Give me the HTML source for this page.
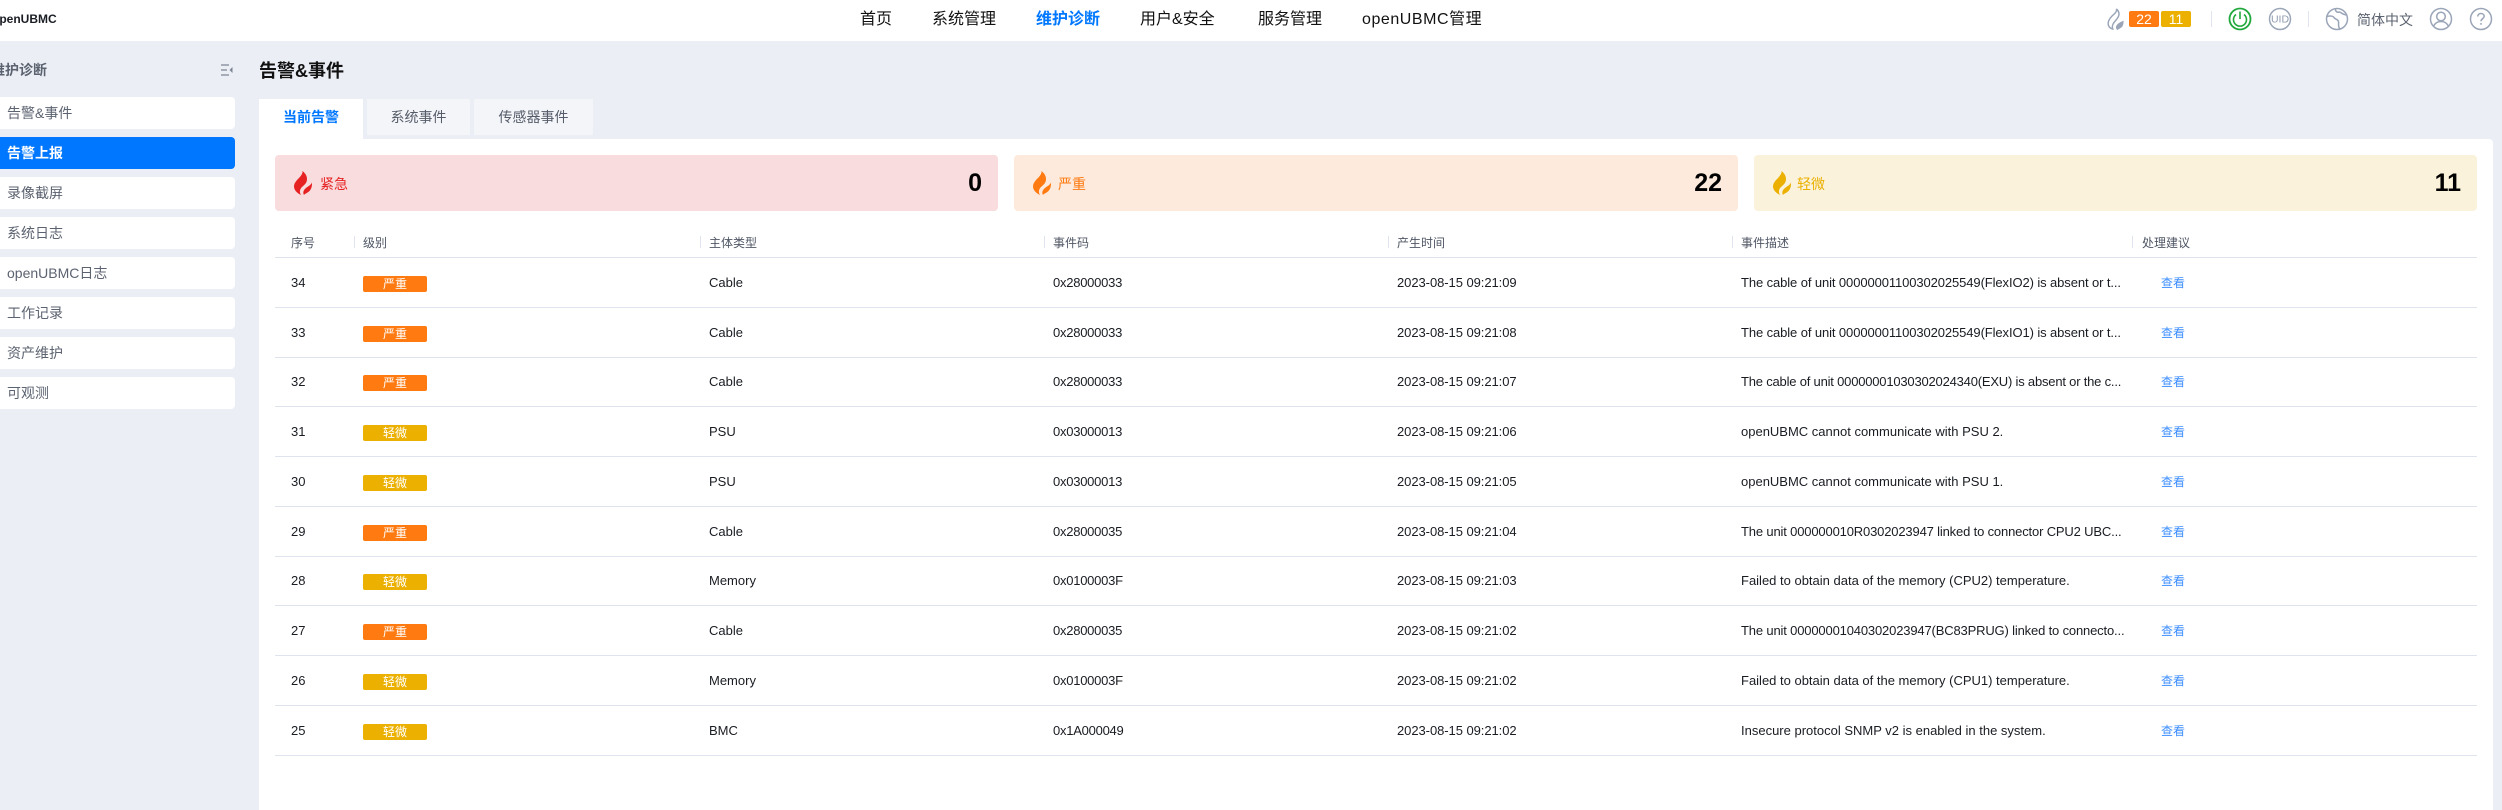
<!DOCTYPE html>
<html lang="zh"><head><meta charset="utf-8"><title>告警&amp;事件</title>
<style>
*{box-sizing:border-box}
html,body{margin:0;padding:0;width:2502px;height:810px;overflow:hidden;background:#ebeef5;font-family:"Liberation Sans","Noto Sans CJK SC",sans-serif;color:#000}
.a{position:absolute;white-space:nowrap}
#top{position:absolute;left:0;top:0;width:2502px;height:41px;background:#fff}
.nav{top:8px;font-size:16px;line-height:24px;color:#111}
.side{position:absolute;left:-10px;width:245px;height:32px;background:#fff;border-radius:4px;font-size:14px;line-height:32px;padding-left:17px;color:#5c6370}
.side.on{background:#0077ff;color:#fff;font-weight:700}
.tab{position:absolute;top:99px;height:36px;background:#f4f5f9;font-size:14px;line-height:36px;text-align:center;color:#555c69}
.card{position:absolute;top:155px;height:56px;border-radius:4px}
.card svg{position:absolute;top:16px}
.card span{position:absolute;top:18px;font-size:14px;line-height:22px}
.card b{position:absolute;right:16px;top:12px;font-size:25px;line-height:32px;color:#000}
.th{top:234px;font-size:12px;line-height:18px;color:#4f5664}
.sep{position:absolute;top:236px;width:1px;height:12px;background:#dfe4ee}
.line{position:absolute;left:275px;width:2202px;height:1px;background:#dfe3ee}
.td{font-size:13px;line-height:20px;color:#191c22}
.c{letter-spacing:-.25px}
.t{letter-spacing:-.06px}
.s1{letter-spacing:-.1px}
.s2{letter-spacing:-.16px}
.s3{letter-spacing:-.2px}
.bg{position:absolute;left:363px;width:64px;height:16px;border-radius:2px;color:#fff;font-size:12px;line-height:16px;text-align:center}
.o{background:#ff7a10}.y{background:#ebb000}
.lk{position:absolute;left:2161px;font-size:12px;line-height:20px;color:#3c8eff}
.ico{position:absolute;fill:none;stroke:#9aa5b8;stroke-width:1.5}
</style></head><body>
<svg width="0" height="0" style="position:absolute"><defs>
<symbol id="fl" viewBox="0 0 18 24"><path d="M8.500 0C9 3 6 6 3 9C1 11.500 0 13 0 15.500C0 19 3 22 7 24C5.500 21.500 5.500 19 7.500 16.500C10 14 13 12.500 13 8C13 4.500 11 2 8.500 0Z"/><path d="M18 11.500C17 14 14.500 15 12 17C9.500 19 8.500 21.500 10 24C11 22.500 13.500 22 15.500 20C17.500 18 18.200 14.500 18 11.500Z"/></symbol>
</defs></svg>

<div id="top"></div>
<div class="a" style="left:-8px;top:10px;font-size:12px;line-height:18px;font-weight:700;color:#1a1d24">openUBMC</div>
<div class="a nav" style="left:860px">首页</div>
<div class="a nav" style="left:932px">系统管理</div>
<div class="a nav" style="left:1036px;color:#0077ff;font-weight:700">维护诊断</div>
<div class="a nav" style="left:1140px">用户&amp;安全</div>
<div class="a nav" style="left:1258px">服务管理</div>
<div class="a nav" style="left:1362px;letter-spacing:.55px">openUBMC管理</div>

<svg style="position:absolute;left:2107px;top:8px;fill:none;stroke:#9aa5b8;stroke-width:1.600" width="17" height="22" viewBox="0 0 18 24"><path d="M10 1C11 4 8 6 5 9C2 12 1 14 1 17C1 20 3 22 6 23C5 20 5.500 18 8 15C10 12.500 12.500 10.500 12.800 7C13 4 11.500 2.500 10 1Z"/><path d="M17 15C14.500 16 11.500 17.500 10.500 20C10 21 10.300 22 11 23C12.500 22 14.500 21.500 16 19.500C16.800 18 17 16.500 17 15Z" fill="#9aa5b8"/></svg>
<div class="a" style="left:2129px;top:11px;width:30px;height:16px;border-radius:2px;background:#ff7a10;color:#fff;font-size:14px;line-height:16px;text-align:center">22</div>
<div class="a" style="left:2161px;top:11px;width:30px;height:16px;border-radius:2px;background:#ebb000;color:#fff;font-size:14px;line-height:16px;text-align:center">11</div>
<div class="a" style="left:2211px;top:11px;width:1px;height:16px;background:#dfe4ee"></div>
<svg style="position:absolute;left:2228px;top:7px" width="24" height="24" viewBox="0 0 24 24" fill="none" stroke="#20a83c"><circle cx="12" cy="12" r="10.500" stroke-width="1.800"/><path d="M8 7.500A6.500 6.500 0 1 0 16 7.500M12 4.500V12" stroke-width="1.600"/></svg>
<svg class="ico" style="left:2268px;top:7px" width="24" height="24" viewBox="0 0 24 24"><circle cx="12" cy="12" r="10.500"/><text x="12" y="15.700" text-anchor="middle" font-size="10.500" fill="#8f9aae" stroke="none" font-family="Liberation Sans">UID</text></svg>
<div class="a" style="left:2308px;top:11px;width:1px;height:16px;background:#dfe4ee"></div>
<svg class="ico" style="left:2325px;top:7px" width="24" height="24" viewBox="0 0 24 24"><circle cx="12" cy="12" r="10.500"/><path d="M2 9.500C5 8.500 8 9 9 10.500C10 12.500 13 12 13.500 14.500C14 17 12.500 19.500 15 22M10.500 1.500C10 4 12 6 14.500 5C16 5 16.500 7.500 22 8"/></svg>
<div class="a" style="left:2357px;top:9px;font-size:14px;line-height:22px;color:#5c6370">简体中文</div>
<svg class="ico" style="left:2429px;top:7px" width="24" height="24" viewBox="0 0 24 24"><circle cx="12" cy="12" r="10.500"/><circle cx="12" cy="9.500" r="4.300"/><path d="M4.500 19.500C6 15.800 9 14.500 12 14.500C15 14.500 18 15.800 19.500 19.500"/></svg>
<svg class="ico" style="left:2469px;top:7px" width="24" height="24" viewBox="0 0 24 24"><circle cx="12" cy="12" r="10.500"/><path d="M8.800 9.500C8.800 7.500 10.300 6.500 12 6.500C13.800 6.500 15.200 7.600 15.200 9.300C15.200 11.500 12 11.800 12 14.300M12 16V17.800"/></svg>

<div class="a" style="left:-9px;top:59px;font-size:14px;line-height:22px;font-weight:700;color:#5c6370">维护诊断</div>
<svg style="position:absolute;left:221px;top:64px" width="12" height="12" viewBox="0 0 12 12" fill="none" stroke="#7d8593" stroke-width="1.300"><path d="M0 1H8M0 6H6M0 11H8"/><path d="M11.500 3L8.500 6L11.500 9Z" fill="#7d8593" stroke="none"/></svg>
<div class="side" style="top:97px">告警&amp;事件</div>
<div class="side on" style="top:137px">告警上报</div>
<div class="side" style="top:177px">录像截屏</div>
<div class="side" style="top:217px">系统日志</div>
<div class="side" style="top:257px">openUBMC日志</div>
<div class="side" style="top:297px">工作记录</div>
<div class="side" style="top:337px">资产维护</div>
<div class="side" style="top:377px">可观测</div>

<div class="a" style="left:259px;top:58px;font-size:18px;line-height:26px;font-weight:700;color:#111">告警&amp;事件</div>
<div class="a" style="left:259px;top:139px;width:2234px;height:671px;background:#fff;border-radius:0 4px 0 0"></div>
<div class="tab" style="left:259px;width:104px;height:40px;background:#fff;color:#0077ff;font-weight:700">当前告警</div>
<div class="tab" style="left:367px;width:103px">系统事件</div>
<div class="tab" style="left:474px;width:119px">传感器事件</div>

<div class="card" style="left:275px;width:723px;background:#f9dcdd"><svg style="left:19px" width="18" height="24" fill="#e62222"><use href="#fl"/></svg><span style="left:45px;color:#e62222">紧急</span><b>0</b></div>
<div class="card" style="left:1014px;width:724px;background:#fdeadc"><svg style="left:19px" width="18" height="24" fill="#ff7a10"><use href="#fl"/></svg><span style="left:44px;color:#ff7a10">严重</span><b>22</b></div>
<div class="card" style="left:1754px;width:723px;background:#fbf2db"><svg style="left:19px" width="18" height="24" fill="#ebb000"><use href="#fl"/></svg><span style="left:43px;color:#ebb000">轻微</span><b>11</b></div>

<div class="a th" style="left:291px">序号</div><div class="sep" style="left:354px"></div>
<div class="a th" style="left:363px">级别</div><div class="sep" style="left:700px"></div>
<div class="a th" style="left:709px">主体类型</div><div class="sep" style="left:1044px"></div>
<div class="a th" style="left:1053px">事件码</div><div class="sep" style="left:1388px"></div>
<div class="a th" style="left:1397px">产生时间</div><div class="sep" style="left:1732px"></div>
<div class="a th" style="left:1741px">事件描述</div><div class="sep" style="left:2132px"></div>
<div class="a th" style="left:2142px">处理建议</div>
<div class="line" style="top:257px"></div>

<div class="a td" style="left:291px;top:273px">34</div><div class="bg o" style="top:276px">严重</div><div class="a td" style="left:709px;top:273px">Cable</div><div class="a td c" style="left:1053px;top:273px">0x28000033</div><div class="a td t" style="left:1397px;top:273px">2023-08-15 09:21:09</div><div class="a td s1" style="left:1741px;top:273px">The cable of unit 00000001100302025549(FlexIO2) is absent or t...</div><div class="lk" style="top:273px">查看</div><div class="line" style="top:307px"></div>
<div class="a td" style="left:291px;top:323px">33</div><div class="bg o" style="top:326px">严重</div><div class="a td" style="left:709px;top:323px">Cable</div><div class="a td c" style="left:1053px;top:323px">0x28000033</div><div class="a td t" style="left:1397px;top:323px">2023-08-15 09:21:08</div><div class="a td s1" style="left:1741px;top:323px">The cable of unit 00000001100302025549(FlexIO1) is absent or t...</div><div class="lk" style="top:323px">查看</div><div class="line" style="top:357px"></div>
<div class="a td" style="left:291px;top:372px">32</div><div class="bg o" style="top:375px">严重</div><div class="a td" style="left:709px;top:372px">Cable</div><div class="a td c" style="left:1053px;top:372px">0x28000033</div><div class="a td t" style="left:1397px;top:372px">2023-08-15 09:21:07</div><div class="a td s3" style="left:1741px;top:372px">The cable of unit 00000001030302024340(EXU) is absent or the c...</div><div class="lk" style="top:372px">查看</div><div class="line" style="top:406px"></div>
<div class="a td" style="left:291px;top:422px">31</div><div class="bg y" style="top:425px">轻微</div><div class="a td" style="left:709px;top:422px">PSU</div><div class="a td c" style="left:1053px;top:422px">0x03000013</div><div class="a td t" style="left:1397px;top:422px">2023-08-15 09:21:06</div><div class="a td" style="left:1741px;top:422px">openUBMC cannot communicate with PSU 2.</div><div class="lk" style="top:422px">查看</div><div class="line" style="top:456px"></div>
<div class="a td" style="left:291px;top:472px">30</div><div class="bg y" style="top:475px">轻微</div><div class="a td" style="left:709px;top:472px">PSU</div><div class="a td c" style="left:1053px;top:472px">0x03000013</div><div class="a td t" style="left:1397px;top:472px">2023-08-15 09:21:05</div><div class="a td" style="left:1741px;top:472px">openUBMC cannot communicate with PSU 1.</div><div class="lk" style="top:472px">查看</div><div class="line" style="top:506px"></div>
<div class="a td" style="left:291px;top:522px">29</div><div class="bg o" style="top:525px">严重</div><div class="a td" style="left:709px;top:522px">Cable</div><div class="a td c" style="left:1053px;top:522px">0x28000035</div><div class="a td t" style="left:1397px;top:522px">2023-08-15 09:21:04</div><div class="a td s2" style="left:1741px;top:522px">The unit 000000010R0302023947 linked to connector CPU2 UBC...</div><div class="lk" style="top:522px">查看</div><div class="line" style="top:556px"></div>
<div class="a td" style="left:291px;top:571px">28</div><div class="bg y" style="top:574px">轻微</div><div class="a td" style="left:709px;top:571px">Memory</div><div class="a td c" style="left:1053px;top:571px">0x0100003F</div><div class="a td t" style="left:1397px;top:571px">2023-08-15 09:21:03</div><div class="a td" style="left:1741px;top:571px">Failed to obtain data of the memory (CPU2) temperature.</div><div class="lk" style="top:571px">查看</div><div class="line" style="top:605px"></div>
<div class="a td" style="left:291px;top:621px">27</div><div class="bg o" style="top:624px">严重</div><div class="a td" style="left:709px;top:621px">Cable</div><div class="a td c" style="left:1053px;top:621px">0x28000035</div><div class="a td t" style="left:1397px;top:621px">2023-08-15 09:21:02</div><div class="a td s2" style="left:1741px;top:621px">The unit 00000001040302023947(BC83PRUG) linked to connecto...</div><div class="lk" style="top:621px">查看</div><div class="line" style="top:655px"></div>
<div class="a td" style="left:291px;top:671px">26</div><div class="bg y" style="top:674px">轻微</div><div class="a td" style="left:709px;top:671px">Memory</div><div class="a td c" style="left:1053px;top:671px">0x0100003F</div><div class="a td t" style="left:1397px;top:671px">2023-08-15 09:21:02</div><div class="a td" style="left:1741px;top:671px">Failed to obtain data of the memory (CPU1) temperature.</div><div class="lk" style="top:671px">查看</div><div class="line" style="top:705px"></div>
<div class="a td" style="left:291px;top:721px">25</div><div class="bg y" style="top:724px">轻微</div><div class="a td" style="left:709px;top:721px">BMC</div><div class="a td c" style="left:1053px;top:721px">0x1A000049</div><div class="a td t" style="left:1397px;top:721px">2023-08-15 09:21:02</div><div class="a td" style="left:1741px;top:721px">Insecure protocol SNMP v2 is enabled in the system.</div><div class="lk" style="top:721px">查看</div><div class="line" style="top:755px"></div>
</body></html>
